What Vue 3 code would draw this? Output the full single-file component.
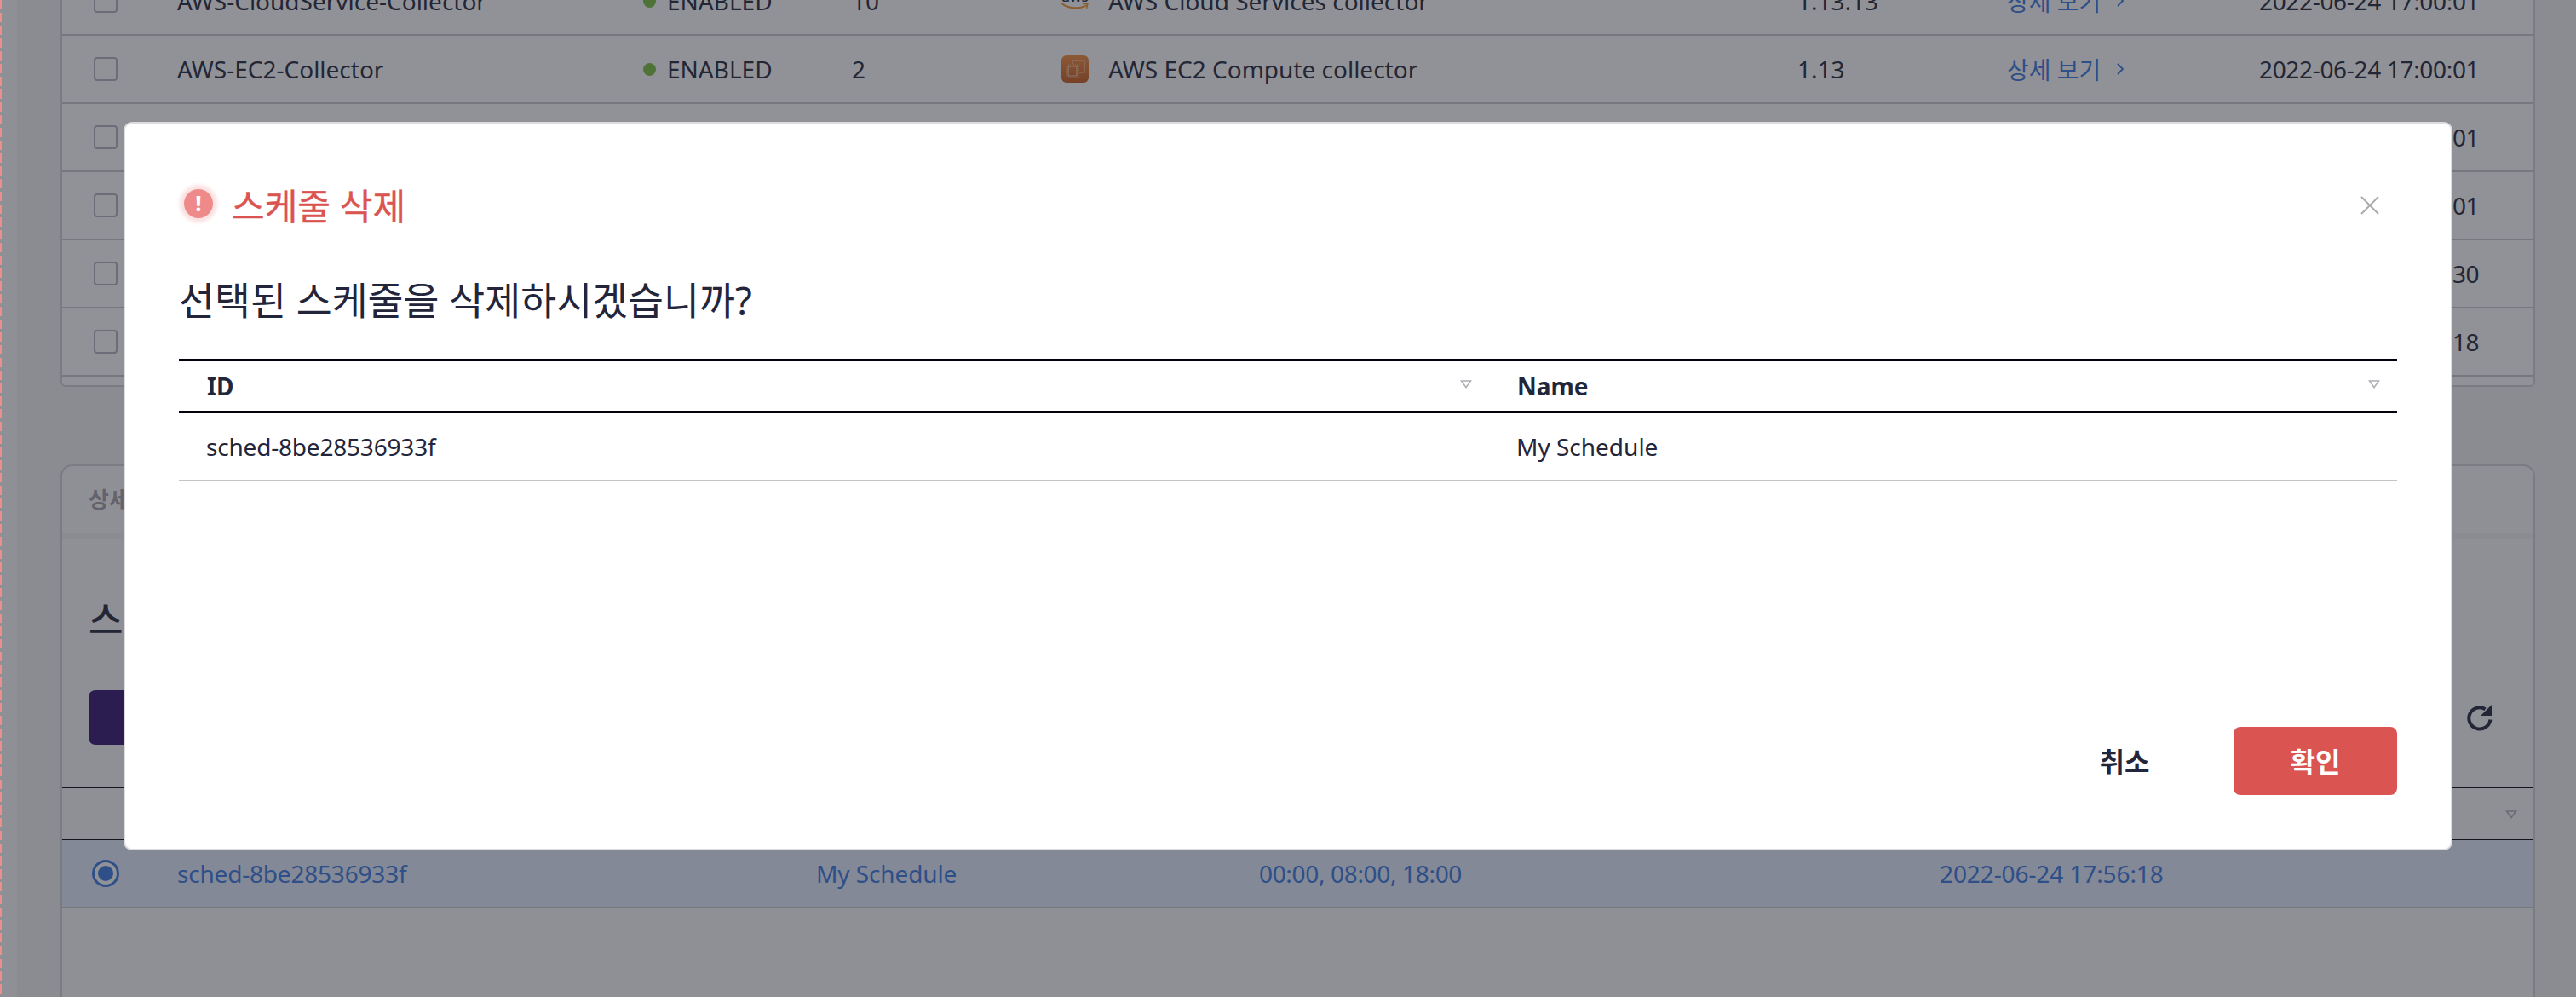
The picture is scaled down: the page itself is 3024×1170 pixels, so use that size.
<script setup>
const rows = [
  { name: 'AWS-CloudService-Collector', state: 'ENABLED', count: '10', icon: 'aws', desc: 'AWS Cloud Services collector', ver: '1.13.13', date: '2022-06-24 17:00:01' },
  { name: 'AWS-EC2-Collector', state: 'ENABLED', count: '2', icon: 'ec2', desc: 'AWS EC2 Compute collector', ver: '1.13', date: '2022-06-24 17:00:01' },
  { date: '2022-06-24 17:00:01' },
  { date: '2022-06-24 17:00:01' },
  { date: '2022-06-24 17:00:30' },
  { date: '2022-06-24 17:56:18' },
]
</script>

<template>
  <div class="page">
    <div class="rail"></div>
    <main class="main">
      <section class="collectors">
        <div v-for="(r, i) in rows" :key="i" class="row">
          <div class="cell center"><span class="check"></span></div>
          <div class="cell">{{ r.name }}</div>
          <div class="cell state">
            <template v-if="r.state"><i class="dot"></i><span>{{ r.state }}</span></template>
          </div>
          <div class="cell">{{ r.count }}</div>
          <div class="cell desc">
            <span v-if="r.icon === 'aws'" class="aws">
              <span class="aws-word">aws</span>
              <svg width="32" height="10" viewBox="0 0 32 10" fill="none">
                <path d="M1 1.5C8 7 21 8 29 3.5" stroke="#f0952e" stroke-width="2" stroke-linecap="round" />
                <path d="M25.5 1.5L31 1.2L29.6 6.2" stroke="#f0952e" stroke-width="1.6" stroke-linecap="round" />
              </svg>
            </span>
            <span v-else-if="r.icon === 'ec2'" class="ec2">
              <svg width="32" height="32" viewBox="0 0 32 32" fill="none" stroke="#f5e0cf" stroke-opacity="0.8">
                <rect x="6" y="11" width="14" height="15" stroke-width="0.9" stroke-dasharray="1 1" />
                <rect x="8" y="13" width="10" height="11" rx="1" stroke-width="1.2" />
                <path d="M13 10.5V6h14v14h-6" stroke-width="1.2" />
              </svg>
            </span>
            <span v-if="r.desc">{{ r.desc }}</span>
          </div>
          <div class="cell">{{ r.ver }}</div>
          <div class="cell link">
            <template v-if="r.name">
              <span>상세 보기</span>
              <svg class="chev" width="10" height="14" viewBox="0 0 10 14" fill="none">
                <path d="M2 1l6 6-6 6" stroke="currentColor" stroke-width="1.8" />
              </svg>
            </template>
          </div>
          <div class="cell num">{{ r.date }}</div>
        </div>
        <div class="foot"></div>
      </section>

      <section class="card">
        <div class="tab-head"><span class="tab-label">상세 정보</span></div>
        <div class="band"></div>
        <h2 class="heading">스케줄</h2>
        <div class="toolbar">
          <span class="add">추가</span>
          <svg class="refresh" width="32" height="32" viewBox="0 0 32 32" fill="none">
            <path d="M28.4 18.5A12.6 12.6 0 1 1 22.5 6.2" stroke="currentColor" stroke-width="4" />
            <path d="M30 1V14H17z" fill="currentColor" />
          </svg>
        </div>
        <div class="sched-head">
          <svg class="tri" width="14" height="10" viewBox="0 0 14 10" fill="none">
            <path d="M1.5 1h11L7 8.6z" stroke="currentColor" stroke-width="1.6" />
          </svg>
        </div>
        <div class="sched-row">
          <div class="center"><span class="radio"><i></i></span></div>
          <div class="id">sched-8be28536933f</div>
          <div>My Schedule</div>
          <div class="num">00:00, 08:00, 18:00</div>
          <div>2022-06-24 17:56:18</div>
        </div>
      </section>
    </main>

    <div class="overlay">
      <div class="modal">
        <header class="m-head">
          <span class="alert"><i>!</i></span>
          <h3 class="m-title">스케줄 삭제</h3>
          <svg class="close" width="24" height="24" viewBox="0 0 24 24" fill="none">
            <path d="M2 2l20 20M22 2L2 22" stroke="currentColor" stroke-width="2" />
          </svg>
        </header>
        <p class="m-sub">선택된 스케줄을 삭제하시겠습니까?</p>
        <div class="m-table">
          <div class="m-tr m-th">
            <div class="m-cell">ID
              <svg class="m-tri" width="14" height="10" viewBox="0 0 14 10" fill="none"><path d="M1.5 1h11L7 8.6z" stroke="currentColor" stroke-width="1.6" /></svg>
            </div>
            <div class="m-cell">Name
              <svg class="m-tri" width="14" height="10" viewBox="0 0 14 10" fill="none"><path d="M1.5 1h11L7 8.6z" stroke="currentColor" stroke-width="1.6" /></svg>
            </div>
          </div>
          <div class="m-tr m-td">
            <div class="m-cell id">sched-8be28536933f</div>
            <div class="m-cell">My Schedule</div>
          </div>
        </div>
        <footer class="m-foot">
          <button class="btn cancel">취소</button>
          <button class="btn ok">확인</button>
        </footer>
      </div>
    </div>
    <div class="dash"></div>
  </div>
</template>

<style scoped>
.page {
  position: relative;
  display: flex;
  width: 3024px;
  height: 1170px;
  overflow: hidden;
  background: #f2f2f3;
  font-family: "Noto Sans", "Noto Sans CJK KR", sans-serif;
  font-size: 28px;
  color: #23263a;
}
.rail {
  flex: none;
  width: 71px;
  height: 100%;
  box-sizing: border-box;
  background: #f2f2f3;
  border-left: 20px solid #fafafa;
}
.main {
  flex: none;
  width: 2905px;
  margin-top: -38px;
  display: flex;
  flex-direction: column;
}
.collectors {
  background: #fff;
  border-left: 2px solid #d0d1d6;
  border-right: 2px solid #d0d1d6;
  border-bottom: 2px solid #d0d1d6;
  border-radius: 0 0 6px 6px;
}
.row {
  display: grid;
  grid-template-columns: 135px 547px 245px 246px 864px 246px 296px 1fr;
  height: 80px;
  box-sizing: border-box;
  border-bottom: 2px solid #c8cad0;
}
.cell {
  display: flex;
  align-items: center;
  white-space: nowrap;
}
.num {
  letter-spacing: -0.33px;
}
.id {
  letter-spacing: -0.2px;
}
.center {
  display: flex;
  align-items: center;
  padding-left: 37px;
}
.check {
  width: 28px;
  height: 28px;
  box-sizing: border-box;
  border: 2px solid #b2b5c3;
  border-radius: 4px;
  background: #fff;
}
.state {
  gap: 13px;
}
.dot {
  width: 15px;
  height: 15px;
  border-radius: 50%;
  background: #7bc13f;
}
.desc {
  gap: 23px;
}
.aws {
  width: 32px;
  height: 32px;
  display: flex;
  flex-direction: column;
  align-items: center;
  justify-content: flex-end;
  margin-top: -8px;
}
.aws-word {
  font-size: 17px;
  line-height: 14px;
  font-weight: 500;
}
.ec2 {
  width: 32px;
  height: 32px;
  border-radius: 6px;
  background: linear-gradient(180deg, #f58c3c, #c85d1e);
  display: block;
}
.ec2 svg {
  display: block;
}
.link {
  color: #3878e1;
}
.chev {
  margin-left: 18px;
}
.foot {
  height: 10px;
}
.card {
  margin-top: 91px;
  flex: 1;
  background: #fbfbfb;
  border: 2px solid #d0d1d6;
  border-bottom: 0;
  border-radius: 14px 14px 0 0;
  display: flex;
  flex-direction: column;
}
.tab-head {
  height: 79px;
  padding: 19px 0 0 31px;
  box-sizing: border-box;
}
.tab-label {
  font-size: 26px;
  font-weight: 700;
  color: #a0a1a8;
}
.band {
  height: 7px;
  background: #f2f2f3;
}
.heading {
  margin: 64px 0 0 31px;
  font-size: 44px;
  line-height: 60px;
  font-weight: 500;
}
.toolbar {
  margin: 53px 0 0;
  height: 64px;
  padding: 0 47px 0 31px;
  display: flex;
  align-items: center;
  justify-content: space-between;
}
.add {
  width: 220px;
  height: 64px;
  border-radius: 8px;
  background: #321471;
  color: #fff;
  display: flex;
  align-items: center;
  justify-content: center;
}
.sched-head {
  margin-top: 49px;
  height: 63px;
  box-sizing: border-box;
  border-top: 2px solid #02030c;
  border-bottom: 2px solid #02030c;
  display: flex;
  align-items: center;
  justify-content: flex-end;
  padding-right: 19px;
  color: #b0b1b8;
}
.tri {
  margin-top: 2px;
}
.sched-row {
  display: grid;
  grid-template-columns: 135px 750px 520px 799px 1fr;
  align-items: center;
  height: 80px;
  box-sizing: border-box;
  border-bottom: 2px solid #c8cad0;
  background: #e2ecff;
  color: #3878e1;
  letter-spacing: -0.1px;
}
.radio {
  width: 32px;
  height: 32px;
  box-sizing: border-box;
  border: 3px solid #3878e1;
  border-radius: 50%;
  margin-left: -2px;
  display: flex;
  align-items: center;
  justify-content: center;
  background: #fff;
}
.radio i {
  width: 18px;
  height: 18px;
  border-radius: 50%;
  background: #3878e1;
}
.overlay {
  position: absolute;
  inset: 0;
  z-index: 10;
  background: rgba(36, 38, 47, 0.5);
  padding: 143px 0 0 145px;
  box-sizing: border-box;
}
.modal {
  width: 2734px;
  height: 855px;
  box-sizing: border-box;
  background: #fff;
  border: 2px solid #dddde0;
  border-radius: 10px;
  padding: 0 63px 63px;
  display: flex;
  flex-direction: column;
}
.m-head {
  display: flex;
  align-items: center;
  height: 192px;
  margin-top: -2px;
}
.alert {
  flex: none;
  width: 34px;
  height: 34px;
  margin-left: 6px;
  border-radius: 50%;
  background: #ee8a8a;
  box-shadow: 0 0 4px 5px #fbe1e1;
  color: #fff;
  display: flex;
  align-items: center;
  justify-content: center;
}
.alert i {
  font-style: normal;
  font-weight: 800;
  font-size: 24px;
  line-height: 1;
}
.m-title {
  margin: 0 0 0 22px;
  font-size: 42px;
  font-weight: 400;
  -webkit-text-stroke: 0.4px #da5451;
  color: #da5451;
}
.close {
  margin-left: auto;
  margin-right: 20px;
  margin-top: 4px;
  color: #a9aaae;
}
.m-sub {
  margin: -16px 0 0;
  font-size: 45.6px;
  line-height: 66px;
  color: #23263a;
}
.m-table {
  margin-top: 36px;
}
.m-tr {
  display: grid;
  grid-template-columns: 1538px 1fr;
}
.m-th {
  height: 64px;
  box-sizing: border-box;
  border-top: 3px solid #02030c;
  border-bottom: 3px solid #02030c;
  font-weight: 700;
}
.m-td {
  height: 80px;
  box-sizing: border-box;
  border-bottom: 2px solid #c4c4c8;
}
.m-cell {
  display: flex;
  align-items: center;
  justify-content: space-between;
  padding: 0 20px 0 33px;
}
.m-td .m-cell {
  padding-left: 32px;
}
.m-tri {
  color: #adaeb3;
  margin-top: -4px;
}
.m-foot {
  margin-top: auto;
  display: flex;
  justify-content: flex-end;
  align-items: center;
}
.btn {
  height: 80px;
  border: 0;
  border-radius: 8px;
  font: inherit;
  font-size: 32px;
  font-weight: 700;
  padding: 0 0 3px;
}
.cancel {
  width: 192px;
  margin-right: 32px;
  background: transparent;
  color: #23263a;
}
.ok {
  width: 192px;
  background: #da5451;
  color: #fff;
}
.dash {
  position: absolute;
  z-index: 20;
  left: 0;
  top: 0;
  bottom: 0;
  width: 2px;
  background: repeating-linear-gradient(180deg, #ec8f8c 0 11px, transparent 11px 15px);
}
</style>

<style>
html, body {
  margin: 0;
  overflow: hidden;
}
</style>
